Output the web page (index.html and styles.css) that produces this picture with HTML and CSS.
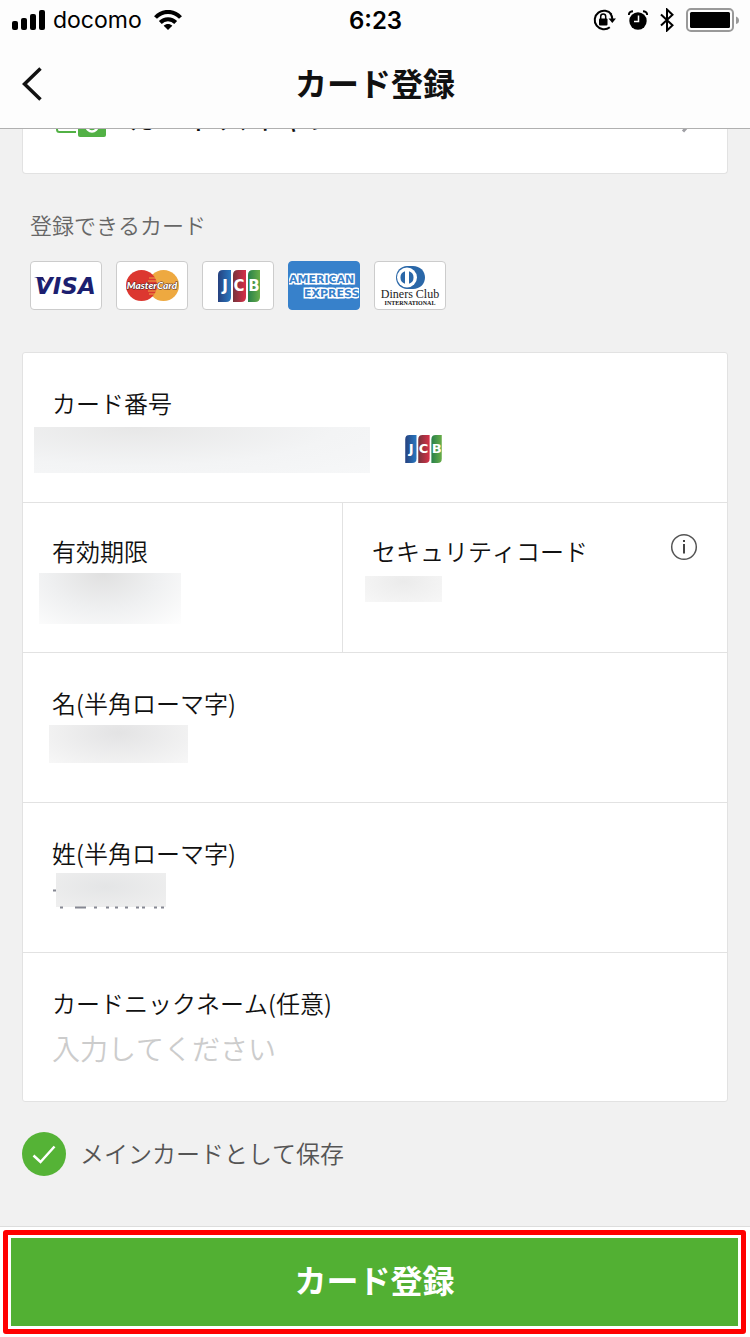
FILE: index.html
```
<!DOCTYPE html>
<html lang="ja">
  <head>
    <meta charset="UTF-8" />
    <meta name="viewport" content="width=device-width, initial-scale=1.0" />
    <title>カード登録</title>
    <link rel="stylesheet" href="styles.css">
  </head>
  <body>
    <header class="header">
      <div class="status-bar">
        <div class="status-left">
          <svg class="signal" width="33" height="20" viewBox="0 0 33 20">
            <rect x="0" y="11" width="6" height="9" rx="2" />
            <rect x="9" y="8" width="6" height="12" rx="2" />
            <rect x="18" y="4" width="6" height="16" rx="2" />
            <rect x="27" y="0" width="6" height="20" rx="2" />
          </svg>
          <span class="carrier">docomo</span>
          <svg class="wifi" width="28" height="20" viewBox="0 0 28 20">
            <path d="M1.5 7.5C8.5 0 19.500 0 26.500 7.500" fill="none" stroke="#000" stroke-width="4" />
            <path d="M6.300 12.500C10.500 8.200 17.500 8.200 21.700 12.500" fill="none" stroke="#000" stroke-width="4" />
            <path d="M9.700 15.700C12 13.400 16 13.400 18.300 15.700L14 20Z" />
          </svg>
        </div>
        <span class="time">6:23</span>
        <div class="status-right">
          <svg class="rotation-lock" width="23" height="22" viewBox="0 0 23 22">
            <path d="M18.500 5.500A9.300 9.300 0 1 0 16.800 18.300" fill="none" stroke="#000" stroke-width="2" />
            <path d="M17.300 4.300Q19.300 7 19.300 10" fill="none" stroke="#000" stroke-width="2" />
            <path d="M15.500 9.500H23L19.300 14Z" />
            <rect x="6" y="9.500" width="8.500" height="7" rx="1" />
            <path d="M7.700 10V7.500a2.500 2.500 0 0 1 5 0V10" fill="none" stroke="#000" stroke-width="1.500" />
          </svg>
          <svg class="alarm" width="20" height="20" viewBox="0 0 20 20">
            <circle cx="10" cy="11" r="8.700" />
            <path d="M.8 5Q1 1.500 5 1.300M19.200 5Q19 1.500 15 1.300" fill="none" stroke="#000" stroke-width="2" />
            <path d="M10.500 5.500V11.500H6" fill="none" stroke="#fff" stroke-width="1.500" />
          </svg>
          <svg class="bluetooth" width="14" height="24" viewBox="0 0 14 24">
            <path d="M1 6.500L12.500 17.200L7 22.500V1.500L12.500 6.800L1 17.500" fill="none" stroke="#000" stroke-width="2" />
          </svg>
          <svg class="battery" width="53" height="24" viewBox="0 0 53 24">
            <rect x="1" y="1" width="46" height="22" rx="4" fill="none" stroke="#999" stroke-width="2" />
            <rect x="4" y="4" width="40" height="16" rx="1.500" />
            <path d="M50 8.500Q53 9.500 53 12.500T50 16Z" fill="#999" />
          </svg>
        </div>
      </div>
      <nav class="nav-bar">
        <a href="#" class="back" aria-label="戻る">
          <svg width="20" height="34" viewBox="0 0 20 34">
            <path d="M18.500 1.500L2.500 17L18.500 32.500" fill="none" stroke="#111" stroke-width="3.500" />
          </svg>
        </a>
        <h1 class="title">カード登録</h1>
      </nav>
    </header>

    <main class="content">
      <div class="scan-card">
        <a href="#" class="scan-link">
          <svg width="50" height="40" viewBox="0 0 50 40">
            <path d="M20 35H3.500A2.500 2.500 0 0 1 1 32.500V4A2.500 2.500 0 0 1 3.500 1H44V14" fill="none" stroke="#52b145" stroke-width="2" />
            <rect x="22" y="17" width="28" height="23" rx="2" fill="#52b145" />
            <circle cx="36" cy="29" r="5.500" fill="none" stroke="#fff" stroke-width="2.500" />
          </svg>
          <span class="scan-text">カードスキャン</span>
          <svg width="14" height="32" viewBox="0 0 14 32">
            <path d="M4 30.500L13 20.500L4 10.500" fill="none" stroke="#a0a0a5" stroke-width="3" />
          </svg>
        </a>
      </div>

      <h2 class="brands-title">登録できるカード</h2>
      <ul class="brands">
        <li class="brand">
          <svg viewBox="0 0 70 47" role="img" aria-label="VISA">
            <text class="visa" x="4" y="32">VISA</text>
            <path d="M3 15H12L15 21Q10 16.500 3 15Z" fill="#1c1f70" />
          </svg>
        </li>
        <li class="brand">
          <svg viewBox="0 0 70 47" role="img" aria-label="MasterCard">
            <circle cx="46.500" cy="23.500" r="15.500" fill="#eea940" />
            <circle cx="24.500" cy="23.500" r="15.500" fill="#dc3730" />
            <path d="M32 16H40M31 19H41M31 29H41M32 32H39" stroke="#eea940" stroke-width="1" />
            <text class="mastercard" x="35" y="27">MasterCard</text>
          </svg>
        </li>
        <li class="brand">
          <svg viewBox="0 0 70 47" role="img" aria-label="JCB">
            <defs>
              <linearGradient id="jcb-blue"><stop offset="0" stop-color="#26417f" /><stop offset="1" stop-color="#2878c0" /></linearGradient>
              <linearGradient id="jcb-red"><stop offset="0" stop-color="#75333c" /><stop offset="1" stop-color="#d83048" /></linearGradient>
              <linearGradient id="jcb-green"><stop offset="0" stop-color="#28804a" /><stop offset="1" stop-color="#68ad48" /></linearGradient>
              <symbol id="jcb" viewBox="0 0 42 32">
                <path d="M0 5Q0 0 5 0H13V27Q13 32 8 32H0Z" fill="url(#jcb-blue)" />
                <path d="M15 5Q15 0 20 0H28V27Q28 32 23 32H15Z" fill="url(#jcb-red)" />
                <path d="M30 5Q30 0 35 0H42V27Q42 32 37 32H30Z" fill="url(#jcb-green)" />
                <text class="jcb-letter" x="7" y="21">J</text>
                <text class="jcb-letter" x="21" y="21">C</text>
                <text class="jcb-letter" x="36" y="21">B</text>
              </symbol>
            </defs>
            <use href="#jcb" x="15" y="8" width="42" height="32" />
          </svg>
        </li>
        <li class="brand amex">
          <svg viewBox="0 0 70 47" role="img" aria-label="American Express">
            <text class="amex-text" x="0" y="21">AMERICAN</text>
            <text class="amex-text" x="15" y="35">EXPRESS</text>
          </svg>
        </li>
        <li class="brand">
          <svg viewBox="0 0 70 47" role="img" aria-label="Diners Club International">
            <path d="M32 4H38C45 4 50 9 50 15.500S45 27 38 27H32C26 27 21 22 21 15.500S26 4 32 4Z" fill="#2a67a8" />
            <circle cx="32" cy="15.500" r="10" fill="#fff" />
            <path d="M30 9.300A6.500 6.500 0 0 0 30 21.700ZM34 9.300A6.500 6.500 0 0 1 34 21.700Z" fill="#2a67a8" />
            <text class="diners" x="35" y="36">Diners Club</text>
            <text class="diners-sub" x="35" y="43">INTERNATIONAL</text>
          </svg>
        </li>
      </ul>

      <form class="card-form" id="card-form">
        <div class="field">
          <label for="card-number">カード番号</label>
          <div class="number-row">
            <input type="text" id="card-number" inputmode="numeric" />
            <svg class="number-brand" width="37" height="28" viewBox="0 0 42 32" role="img" aria-label="JCB"><use href="#jcb" width="42" height="32" /></svg>
          </div>
          <span class="mask mask-number"></span>
        </div>
        <div class="field-split">
          <div class="field">
            <label for="expiry">有効期限</label>
            <input type="text" id="expiry" />
            <span class="mask mask-expiry"></span>
          </div>
          <div class="field">
            <div class="label-row">
              <label for="security-code">セキュリティコード</label>
              <button type="button" class="info" aria-label="セキュリティコードについて">
                <svg width="28" height="28" viewBox="0 0 28 28">
                  <circle cx="14" cy="14" r="12.300" fill="none" stroke="#555" stroke-width="1.500" />
                  <path d="M14 11V20.500M14 7V9" stroke="#444" stroke-width="2" />
                </svg>
              </button>
            </div>
            <input type="text" id="security-code" inputmode="numeric" />
            <span class="mask mask-code"></span>
          </div>
        </div>
        <div class="field">
          <label for="first-name">名(半角ローマ字)</label>
          <input type="text" id="first-name" />
          <span class="mask mask-first"></span>
        </div>
        <div class="field">
          <label for="last-name">姓(半角ローマ字)</label>
          <input type="text" id="last-name" />
          <span class="mask mask-last"></span>
          <svg class="mask-edge" width="113" height="23" viewBox="0 0 113 23">
            <path d="M0 4.500H3M7 21.500H10M22 21.500H33M41 21.500H44M53 21.500H56M62 21.500H65M72 21.500H75M83 21.500H86M89 21.500H92M101 21.500H104M108 21.500H111" stroke="#858792" stroke-width="2" />
          </svg>
        </div>
        <div class="field">
          <label for="nickname">カードニックネーム(任意)</label>
          <input type="text" id="nickname" placeholder="入力してください" />
        </div>
      </form>

      <label class="save-main">
        <span class="check">
          <input type="checkbox" form="card-form" checked />
          <svg width="44" height="44" viewBox="0 0 44 44">
            <path d="M11.500 23.500L18.500 30L32.500 14.500" fill="none" stroke="#fff" stroke-width="2.500" />
          </svg>
        </span>
        <span class="save-text">メインカードとして保存</span>
      </label>
    </main>

    <footer class="footer">
      <div class="highlight">
        <button type="submit" form="card-form" class="submit">カード登録</button>
      </div>
    </footer>
  </body>
</html>
```
FILE: styles.css
```
* {
  box-sizing: border-box;
}
body {
  margin: 0;
  min-height: 100vh;
  display: flex;
  flex-direction: column;
  background: #f1f1f1;
  color: #111;
  font-family: "Noto Sans CJK JP", sans-serif;
  font-size: 24px;
  font-weight: 350;
  font-kerning: none;
}
svg {
  display: block;
}
a {
  color: inherit;
  text-decoration: none;
}
.header {
  background: #fdfdfd;
  border-bottom: 1px solid #b0b0b0;
}
.status-bar {
  display: grid;
  grid-template-columns: 1fr auto 1fr;
  align-items: center;
  height: 40px;
  padding: 0 11px 0 12px;
  color: #000;
  font-family: Inter, sans-serif;
  font-weight: 400;
}
.status-left,
.status-right {
  display: flex;
  align-items: center;
}
.status-left {
  gap: 8px;
}
.carrier {
  font-size: 23px;
}
.wifi {
  margin-left: 4px;
}
.status-right {
  justify-content: flex-end;
  gap: 12px;
}
.time {
  font-weight: 600;
}
.nav-bar {
  display: grid;
  grid-template-columns: 1fr auto 1fr;
  align-items: center;
  height: 88px;
  padding: 0 22px;
}
.title {
  margin: 0;
  padding-bottom: 4px;
  font-size: 32px;
  line-height: 48px;
  font-weight: 700;
}
.content {
  flex: 1;
  padding: 0 22px 30px;
}
/* scrolled under the header, only the bottom of the row shows */
.scan-card {
  display: flex;
  align-items: flex-end;
  height: 45px;
  overflow: hidden;
  background: #fff;
  border: 1px solid #e2e2e2;
  border-top: none;
  border-radius: 0 0 4px 4px;
}
.scan-link {
  flex: 1;
  display: flex;
  align-items: center;
  gap: 22px;
  height: 112px;
  padding: 0 34px 0 33px;
}
.scan-text {
  flex: 1;
  padding-bottom: 2px;
  font-size: 30px;
  font-weight: 400;
}
.brands-title {
  margin: 34px 8px 20px;
  color: #666;
  font-size: 22px;
  line-height: 33px;
  font-weight: 350;
}
.brands {
  display: flex;
  gap: 14px;
  margin: 0 8px 42px;
  padding: 0;
  list-style: none;
}
.brand {
  width: 72px;
  height: 49px;
  background: #fff;
  border: 1px solid #ccc;
  border-radius: 4px;
}
.amex {
  background: #3781cb;
  border-color: #3781cb;
}
.visa {
  font: italic bold 23px "DejaVu Sans", sans-serif;
  fill: #1c1f70;
}
.mastercard {
  font: italic 900 10px Lato, sans-serif;
  text-anchor: middle;
  fill: #fff;
  stroke: #4c2420;
  stroke-width: 1px;
  paint-order: stroke;
}
.jcb-letter {
  font: bold 15px "DejaVu Sans", sans-serif;
  text-anchor: middle;
  fill: #fff;
}
.amex-text {
  font: bold 11px "DejaVu Sans", sans-serif;
  fill: #3781cb;
  stroke: #fff;
  stroke-width: 3px;
  paint-order: stroke;
}
.diners {
  font: 12px "Liberation Serif", serif;
  text-anchor: middle;
  fill: #222;
}
.diners-sub {
  font: bold 6px "Liberation Serif", serif;
  text-anchor: middle;
  fill: #111;
}
.card-form {
  background: #fff;
  border: 1px solid #e2e2e2;
  border-radius: 3px;
}
.field {
  position: relative;
  height: 150px;
  padding: 32px 29px 0;
  border-bottom: 1px solid #e2e2e2;
}
.field:last-child {
  height: 148px;
  border-bottom: none;
}
.field label {
  display: block;
  line-height: 36px;
}
.field input {
  display: block;
  width: 100%;
  height: 42px;
  margin-top: 6px;
  padding: 0;
  border: none;
  outline: none;
  background: transparent;
  color: #858792;
  font: inherit;
  font-size: 28px;
}
.field input::placeholder {
  color: #ccc;
  opacity: 1;
}
.field-split {
  display: grid;
  grid-template-columns: 5fr 6fr;
}
.field-split .field {
  height: 150px;
  padding-top: 30px;
  border-bottom: 1px solid #e2e2e2;
}
.field-split .field:first-child {
  border-right: 1px solid #e2e2e2;
}
.number-row {
  display: flex;
  align-items: center;
  gap: 30px;
}
.number-row input {
  width: 50%;
}
.number-brand {
  margin-top: 8px;
}
.label-row {
  display: flex;
  justify-content: space-between;
}
.info {
  height: 28px;
  padding: 0;
  border: none;
  background: none;
}
.mask {
  position: absolute;
}
.mask-number {
  left: 11px;
  top: 74px;
  width: 336px;
  height: 46px;
  background: radial-gradient(ellipse at 30% 0, #e7e7e7, #f3f4f5 60%, #f6f7f8);
}
.mask-expiry {
  left: 16px;
  top: 70px;
  width: 142px;
  height: 51px;
  background: radial-gradient(ellipse at 45% 0, #e0e0e0, #eff0f1 50%, #fefefe);
}
.mask-code {
  left: 22px;
  top: 73px;
  width: 77px;
  height: 26px;
  background: radial-gradient(ellipse at 50% 20%, #ebebeb, #f7f7f7);
}
.mask-first {
  left: 26px;
  top: 72px;
  width: 139px;
  height: 38px;
  background: radial-gradient(ellipse at 50% 20%, #e3e3e4, #f7f7f7);
}
.mask-last {
  left: 33px;
  top: 70px;
  width: 110px;
  height: 34px;
  background: radial-gradient(ellipse at 45% 40%, #e4e5e6, #f0f0f0);
}
.mask-edge {
  position: absolute;
  left: 30px;
  top: 83px;
}
.save-main {
  display: flex;
  align-items: center;
  gap: 14px;
  margin-top: 30px;
  color: #555;
  line-height: 36px;
}
.save-text {
  padding-bottom: 2px;
}
.check {
  display: grid;
}
.check input,
.check svg {
  grid-area: 1 / 1;
}
.check svg {
  pointer-events: none;
}
.check input {
  appearance: none;
  width: 44px;
  height: 44px;
  margin: 0;
  border-radius: 50%;
  background: #ccc;
}
.check input:checked {
  background: #55b336;
}
.footer {
  padding: 3px 4px 3px 3px;
  background: #fff;
  border-top: 1px solid #ddd;
}
.highlight {
  padding: 3px;
  border: 5px solid #f00;
  border-radius: 3px;
}
.submit {
  display: block;
  width: 100%;
  height: 88px;
  padding: 0 0 6px;
  border: none;
  background: #52b033;
  color: #fff;
  font: inherit;
  font-size: 32px;
  font-weight: 700;
}
```
